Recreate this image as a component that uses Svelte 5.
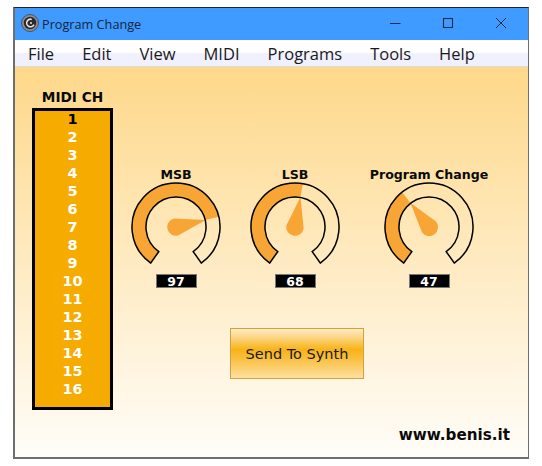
<script>
	const menus = ['File', 'Edit', 'View', 'MIDI', 'Programs', 'Tools', 'Help'];
	const channels = Array.from({ length: 16 }, (_, i) => i + 1);
	let selected = $state(1);

	const knobs = [
		{ label: 'MSB', value: 97 },
		{ label: 'LSB', value: 68 },
		{ label: 'Program Change', value: 47 }
	];

	const SWEEP = 145;
	const C = 46;
	const OUTER = 44;
	const INNER = 30;

	function pt(r, deg) {
		const a = (deg * Math.PI) / 180;
		return `${(C + r * Math.sin(a)).toFixed(2)} ${(C - r * Math.cos(a)).toFixed(2)}`;
	}

	function ring(from, to) {
		const large = to - from > 180 ? 1 : 0;
		return `M${pt(OUTER, from)} A${OUTER} ${OUTER} 0 ${large} 1 ${pt(OUTER, to)} L${pt(INNER, to)} A${INNER} ${INNER} 0 ${large} 0 ${pt(INNER, from)} Z`;
	}

	const angle = (v) => (v / 127) * SWEEP * 2 - SWEEP;

	function needle(v) {
		const a = angle(v);
		return `M${pt(INNER + 0.5, a)} L${pt(8.8, a - 90)} A8.8 8.8 0 1 0 ${pt(8.8, a + 90)} Z`;
	}
</script>

<div class="window">
	<header class="titlebar">
		<svg class="appicon" width="18" height="18" viewBox="0 0 18 18">
			<circle cx="9" cy="9" r="8.5" fill="#8b8d90" stroke="#444" stroke-width="0.8" />
			<circle cx="9" cy="9" r="6.2" fill="#2a2a2c" />
			<circle cx="9.5" cy="9" r="3.8" fill="none" stroke="#e8e8e8" stroke-width="1.6" stroke-dasharray="17 7" transform="rotate(25 9.5 9)" />
			<circle cx="10" cy="9" r="1" fill="#e8e8e8" />
		</svg>
		<span class="title">Program Change</span>
		<div class="controls">
			<svg width="12" height="12" viewBox="0 0 12 12"><path d="M1 6.5H11.500" stroke="#1a2a40" stroke-width="1" /></svg>
			<svg width="12" height="12" viewBox="0 0 12 12"><rect x="1.500" y="1.500" width="9" height="9" fill="none" stroke="#1a2a40" stroke-width="1.100" /></svg>
			<svg width="12" height="12" viewBox="0 0 12 12"><path d="M1 1L11 11M11 1L1 11" stroke="#1a2a40" stroke-width="1" /></svg>
		</div>
	</header>

	<nav class="menubar">
		{#each menus as m}
			<span>{m}</span>
		{/each}
	</nav>

	<main class="content">
		<div class="top">
			<section class="channels">
				<h2>MIDI CH</h2>
				<ul>
					{#each channels as ch}
						<li class:selected={ch === selected}>
							<button onclick={() => (selected = ch)}>{ch}</button>
						</li>
					{/each}
				</ul>
			</section>

			<section class="right">
				<div class="knobs">
					{#each knobs as k}
						<div class="knob">
							<h3>{k.label}</h3>
							<svg width="92" height="92" viewBox="0 0 92 92">
								<path d={ring(-SWEEP, angle(k.value))} fill="#f7a535" />
								<path d={needle(k.value)} fill="#f7a535" />
								<path d={ring(-SWEEP, SWEEP)} fill="none" stroke="#000" stroke-width="1.500" stroke-linejoin="miter" />
							</svg>
							<output>{k.value}</output>
						</div>
					{/each}
				</div>
				<button class="send">Send To Synth</button>
			</section>
		</div>
		<footer>www.benis.it</footer>
	</main>
</div>

<style>
	:global(body) {
		background: #fff;
	}

	.window {
		box-sizing: border-box;
		width: 516px;
		height: 452px;
		margin: 7px 0 0 13px;
		display: flex;
		flex-direction: column;
		border: 2px solid #6e6e6e;
		border-top: 1px solid #222;
		border-right-width: 1px;
		font-family: 'DejaVu Sans', sans-serif;
	}

	.titlebar {
		height: 32px;
		flex: none;
		display: flex;
		align-items: center;
		padding-left: 6px;
		background: #3f9bff;
	}

	.appicon {
		margin: -2px 3px 0 0;
	}

	.title {
		font: 12.700px 'Open Sans', sans-serif;
		color: #14243a;
	}

	.controls {
		margin-left: auto;
		display: flex;
		gap: 41px;
		padding-right: 21px;
		margin-top: -2px;
	}

	.menubar {
		height: 27px;
		flex: none;
		box-sizing: border-box;
		display: flex;
		gap: 28px;
		padding: 1px 0 0 13px;
		align-items: flex-start;
		font: 16.500px/26px 'Open Sans', sans-serif;
		color: #1a1a1a;
		background: linear-gradient(#fff 0 13px, #f0f0fe 13px);
		border-bottom: 1px solid #dcdcdc;
	}

	.content {
		flex: 1;
		display: flex;
		flex-direction: column;
		justify-content: space-between;
		background: linear-gradient(#fed88a, #fffdf9);
	}

	.top {
		display: flex;
	}

	.channels {
		width: 81px;
		margin: 22px 0 0 17px;
	}

	h2,
	h3 {
		margin: 0;
		font-size: 12.600px;
		line-height: 16px;
		font-weight: 700;
		color: #0a0a0a;
		text-align: center;
		white-space: nowrap;
	}

	h2 {
		font-size: 13.700px;
	}

	.channels ul {
		list-style: none;
		margin: 3px 0 0;
		box-sizing: border-box;
		height: 302px;
		padding: 0;
		background: #f5ab00;
		border: 3px solid #000;
	}

	.channels li {
		height: 18px;
	}

	.channels button {
		display: block;
		width: 100%;
		height: 18px;
		padding: 0 0 2px;
		border: 0;
		background: none;
		font: 700 14.500px/16px 'DejaVu Sans', sans-serif;
		color: #fff;
	}

	.channels .selected button {
		color: #000;
	}

	.right {
		display: flex;
		flex-direction: column;
	}

	.knobs {
		display: flex;
		margin: 100px 0 0 17px;
	}

	.knob {
		width: 92px;
		margin-right: 27px;
		display: flex;
		flex-direction: column;
		align-items: center;
	}

	.knob:last-child {
		margin: 0 0 0 15px;
	}

	.knob svg {
		display: block;
		margin-top: -2px;
	}

	.knob output {
		box-sizing: border-box;
		width: 41px;
		height: 14px;
		margin-top: 1px;
		background: #000;
		border: 1px solid #777;
		color: #fff;
		font-weight: 700;
		font-size: 12.500px;
		line-height: 13px;
		text-align: center;
	}

	.send {
		box-sizing: border-box;
		width: 134px;
		height: 51px;
		margin: 40px 0 0 117px;
		border: 1px solid #d0a240;
		background: linear-gradient(#fdebc4 0, #fbd47f 18%, #f8b316 42%, #f9bd3a 58%, #fde0a0 100%);
		font: 14.500px 'DejaVu Sans', sans-serif;
		color: #1a1a1a;
		padding: 0;
	}

	footer {
		align-self: flex-end;
		margin: 0 18px 13px 0;
		font-weight: 700;
		font-size: 15.200px;
		line-height: 18px;
		color: #0a0a0a;
	}
</style>
